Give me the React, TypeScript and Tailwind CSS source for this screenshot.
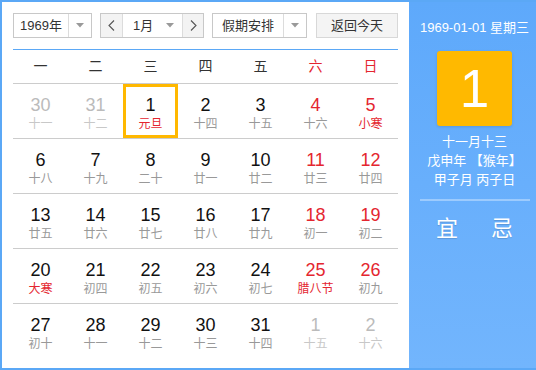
import React from "react";

type Cell = { d: number; l: string; dim?: boolean; redNum?: boolean; redLunar?: boolean; sel?: boolean };

const rows: Cell[][] = [
  [
    { d: 30, l: "十一", dim: true },
    { d: 31, l: "十二", dim: true },
    { d: 1, l: "元旦", redLunar: true, sel: true },
    { d: 2, l: "十四" },
    { d: 3, l: "十五" },
    { d: 4, l: "十六", redNum: true },
    { d: 5, l: "小寒", redNum: true, redLunar: true },
  ],
  [
    { d: 6, l: "十八" },
    { d: 7, l: "十九" },
    { d: 8, l: "二十" },
    { d: 9, l: "廿一" },
    { d: 10, l: "廿二" },
    { d: 11, l: "廿三", redNum: true },
    { d: 12, l: "廿四", redNum: true },
  ],
  [
    { d: 13, l: "廿五" },
    { d: 14, l: "廿六" },
    { d: 15, l: "廿七" },
    { d: 16, l: "廿八" },
    { d: 17, l: "廿九" },
    { d: 18, l: "初一", redNum: true },
    { d: 19, l: "初二", redNum: true },
  ],
  [
    { d: 20, l: "大寒", redLunar: true },
    { d: 21, l: "初四" },
    { d: 22, l: "初五" },
    { d: 23, l: "初六" },
    { d: 24, l: "初七" },
    { d: 25, l: "腊八节", redNum: true, redLunar: true },
    { d: 26, l: "初九", redNum: true },
  ],
  [
    { d: 27, l: "初十" },
    { d: 28, l: "十一" },
    { d: 29, l: "十二" },
    { d: 30, l: "十三" },
    { d: 31, l: "十四" },
    { d: 1, l: "十五", dim: true },
    { d: 2, l: "十六", dim: true },
  ],
];

const weekdays = ["一", "二", "三", "四", "五", "六", "日"];

function Tri() {
  return (
    <svg width="8" height="5" viewBox="0 0 8 5">
      <polygon points="0,0 8,0 4,4.5" fill="#9a9a9a" />
    </svg>
  );
}

function Chev({ dir }: { dir: "l" | "r" }) {
  return (
    <svg width="7" height="11" viewBox="0 0 7 11">
      <polyline
        points={dir === "l" ? "6,0.5 1,5.5 6,10.5" : "1,0.5 6,5.5 1,10.5"}
        fill="none"
        stroke="#555"
        strokeWidth="1.1"
      />
    </svg>
  );
}

export default function App() {
  return (
    <div
      className="w-[536px] h-[370px] box-border flex border-l-2 border-t-2 border-b-2 border-[#5ba8f6] bg-white"
      style={{ fontFamily: '"Liberation Sans", "Noto Sans CJK SC", sans-serif' }}
    >
      <div className="w-[407px] flex flex-col pl-[11px] pt-[11px]">
        <div className="flex h-[25px] text-[13px] text-[#333]">
          <div className="w-[79px] box-border border border-[#c8c8c8] flex">
            <div className="flex-1 flex items-center justify-center">1969年</div>
            <div className="w-[23px] border-l border-[#dcdcdc] flex items-center justify-center">
              <Tri />
            </div>
          </div>
          <div className="ml-[8px] w-[104px] box-border border border-[#c8c8c8] flex">
            <div className="w-[22px] bg-[#f3f3f3] border-r border-[#dcdcdc] flex items-center justify-center">
              <Chev dir="l" />
            </div>
            <div className="flex-1 flex items-center pl-[10px] pr-[8px] justify-between">
              <span>1月</span>
              <Tri />
            </div>
            <div className="w-[21px] bg-[#f3f3f3] border-l border-[#dcdcdc] flex items-center justify-center">
              <Chev dir="r" />
            </div>
          </div>
          <div className="ml-[8px] w-[95px] box-border border border-[#c8c8c8] flex">
            <div className="flex-1 flex items-center justify-center">假期安排</div>
            <div className="w-[23px] border-l border-[#dcdcdc] flex items-center justify-center">
              <Tri />
            </div>
          </div>
          <div className="ml-[9px] w-[82px] box-border border border-[#d8d8d8] bg-[#f4f4f4] flex items-center justify-center">
            返回今天
          </div>
        </div>
        <div className="mt-[11px] w-[385px] h-px bg-[#5ba8f6]" />
        <div className="w-[385px] h-[34px] box-border border-b border-[#cccccc] grid grid-cols-7 items-center text-[14px]">
          {weekdays.map((w, i) => (
            <div key={w} className={"text-center " + (i >= 5 ? "text-[#e4262f]" : "text-[#333]")}>
              {w}
            </div>
          ))}
        </div>
        {rows.map((r, ri) => (
          <div
            key={ri}
            className={
              "w-[385px] grid grid-cols-7 box-border " +
              (ri < rows.length - 1 ? "h-[55px] border-b border-[#cccccc]" : "h-[54px]")
            }
          >
            {r.map((c, ci) => (
              <div
                key={ci}
                className={
                  "h-[54px] flex flex-col items-center pt-[11px] " +
                  (c.sel ? "shadow-[inset_0_0_0_3px_#ffb800]" : "")
                }
              >
                <div
                  className={
                    "text-[18px] leading-[20px] " +
                    (c.dim ? "text-[#bbbbbb]" : c.redNum ? "text-[#e4262f]" : "text-[#111]")
                  }
                >
                  {c.d}
                </div>
                <div
                  className={
                    "mt-[1px] text-[12px] leading-[16px] " +
                    (c.dim ? "text-[#c8c8c8]" : c.redLunar ? "text-[#e4262f]" : "text-[#999]")
                  }
                >
                  {c.l}
                </div>
              </div>
            ))}
          </div>
        ))}
      </div>
      <div className="flex-1 flex flex-col items-center pl-[4px] pt-[17px] text-white bg-gradient-to-b from-[#5ea9fb] to-[#72b5fd]">
        <div className="text-[13px] leading-[18px] whitespace-nowrap">1969-01-01 星期三</div>
        <div className="mt-[14px] w-[75px] h-[75px] rounded-[3px] bg-[#ffb900] flex items-center justify-center text-[53px] leading-none shadow-[0_1px_3px_rgba(0,0,0,0.12)]">
          1
        </div>
        <div className="mt-[6px] text-[13px] leading-[19px] text-center whitespace-nowrap">
          <div>十一月十三</div>
          <div>戊申年 【猴年】</div>
          <div>甲子月 丙子日</div>
        </div>
        <div className="mt-[10px] w-[110px] h-[2px] bg-[rgba(255,255,255,0.35)]" />
        <div className="mt-[13px] flex gap-[33px] text-[22px] leading-[30px] [text-shadow:0_1px_1px_rgba(0,0,0,0.15)]">
          <span>宜</span>
          <span>忌</span>
        </div>
      </div>
    </div>
  );
}
